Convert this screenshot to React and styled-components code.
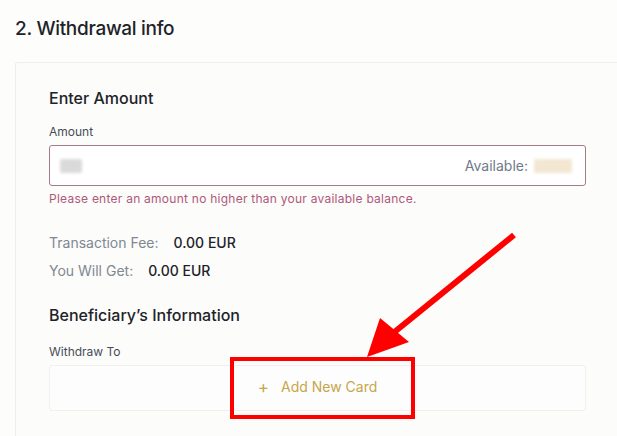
import React from "react";
import styled, { createGlobalStyle } from "styled-components";

const GlobalStyle = createGlobalStyle`
  html, body {
    margin: 0;
    padding: 0;
    background: #fdfdfc;
    font-family: Inter, "Noto Sans", "Liberation Sans", sans-serif;
    color: #1e2329;
  }
`;

export default function App() {
  return (
    <Page>
      <GlobalStyle />
      <Title>2. Withdrawal info</Title>
      <Card>
        <SectionTitle>Enter Amount</SectionTitle>
        <Label>Amount</Label>
        <AmountInput>
          <Blur tone="grey" width={22} />
          <Available>
            Available:
            <Blur tone="beige" width={38} />
          </Available>
        </AmountInput>
        <ErrorText>Please enter an amount no higher than your available balance.</ErrorText>

        <InfoRows>
          <InfoRow>
            <InfoKey>Transaction Fee:</InfoKey>
            <InfoValue>0.00 EUR</InfoValue>
          </InfoRow>
          <InfoRow>
            <InfoKey>You Will Get:</InfoKey>
            <InfoValue>0.00 EUR</InfoValue>
          </InfoRow>
        </InfoRows>

        <SectionTitle>Beneficiary’s Information</SectionTitle>
        <Label spaced>Withdraw To</Label>
        <CardPicker>
          <AddCard>
            <Plus>+</Plus>
            Add New Card
          </AddCard>
        </CardPicker>
      </Card>

      {/* annotation drawn over the screenshot */}
      <Highlight />
      <Arrow width="617" height="436" viewBox="0 0 617 436">
        <line x1="514" y1="235" x2="392" y2="334" stroke="#f00" strokeWidth="6" />
        <polygon points="367,357 380,318 409,342" fill="#f00" />
      </Arrow>
    </Page>
  );
}

const Page = styled.div`
  position: relative;
  height: 436px;
  overflow: hidden;
  padding: 17px 0 0 15px;
  box-sizing: border-box;
`;

const Title = styled.h2`
  margin: 0;
  font-size: 19px;
  font-weight: 500;
  line-height: 24px;
  letter-spacing: -0.3px;
`;

const Card = styled.div`
  margin-top: 21px;
  width: 680px;
  border: 1px solid #efefed;
  border-radius: 2px;
  background: #fcfcfb;
  padding: 24px 0 30px 33px;
  box-sizing: border-box;
`;

const SectionTitle = styled.h3`
  margin: 0;
  font-size: 16px;
  font-weight: 500;
  line-height: 22px;
  color: #1e2329;
`;

const Label = styled.div`
  margin-top: ${(p) => (p.spaced ? 18 : 15)}px;
  font-size: 12px;
  line-height: 16px;
  color: #474d57;
`;

const AmountInput = styled.div`
  margin-top: 5px;
  width: 537px;
  height: 41px;
  box-sizing: border-box;
  border: 1px solid #a57a8a;
  border-radius: 3px;
  background: #fff;
  display: flex;
  align-items: center;
  justify-content: space-between;
  padding: 0 13px 0 10px;
`;

const Blur = styled.span`
  display: inline-block;
  width: ${(p) => p.width}px;
  height: 14px;
  border-radius: 2px;
  background: ${(p) => (p.tone === "beige" ? "#f3e7d3" : "#dadada")};
  filter: blur(1.5px);
`;

const Available = styled.div`
  display: flex;
  align-items: center;
  gap: 6px;
  font-size: 14px;
  color: #707a8a;
`;

const ErrorText = styled.div`
  margin-top: 5px;
  font-size: 12px;
  line-height: 16px;
  color: #b0587a;
  letter-spacing: 0.25px;
`;

const InfoRows = styled.div`
  margin-top: 27px;
  margin-bottom: 24px;
  display: flex;
  flex-direction: column;
  gap: 10px;
`;

const InfoRow = styled.div`
  display: flex;
  align-items: center;
  gap: 15px;
  font-size: 14px;
  line-height: 18px;
`;

const InfoKey = styled.span`
  color: #808891;
`;

const InfoValue = styled.span`
  color: #1e2329;
  font-weight: 500;
`;

const CardPicker = styled.div`
  margin-top: 5px;
  width: 537px;
  height: 46px;
  box-sizing: border-box;
  border: 1px solid #f0f0ee;
  border-radius: 3px;
  background: #fdfdfd;
  display: flex;
  align-items: center;
  justify-content: center;
  padding-bottom: 3px;
`;

const AddCard = styled.div`
  display: flex;
  align-items: center;
  gap: 12px;
  font-size: 14px;
  color: #c5a64a;
`;

const Plus = styled.span`
  font-size: 17px;
  font-weight: 400;
`;

const Highlight = styled.div`
  position: absolute;
  left: 230px;
  top: 357px;
  width: 185px;
  height: 62px;
  box-sizing: border-box;
  border: 4px solid #f00;
`;

const Arrow = styled.svg`
  position: absolute;
  left: 0;
  top: 0;
  pointer-events: none;
`;
